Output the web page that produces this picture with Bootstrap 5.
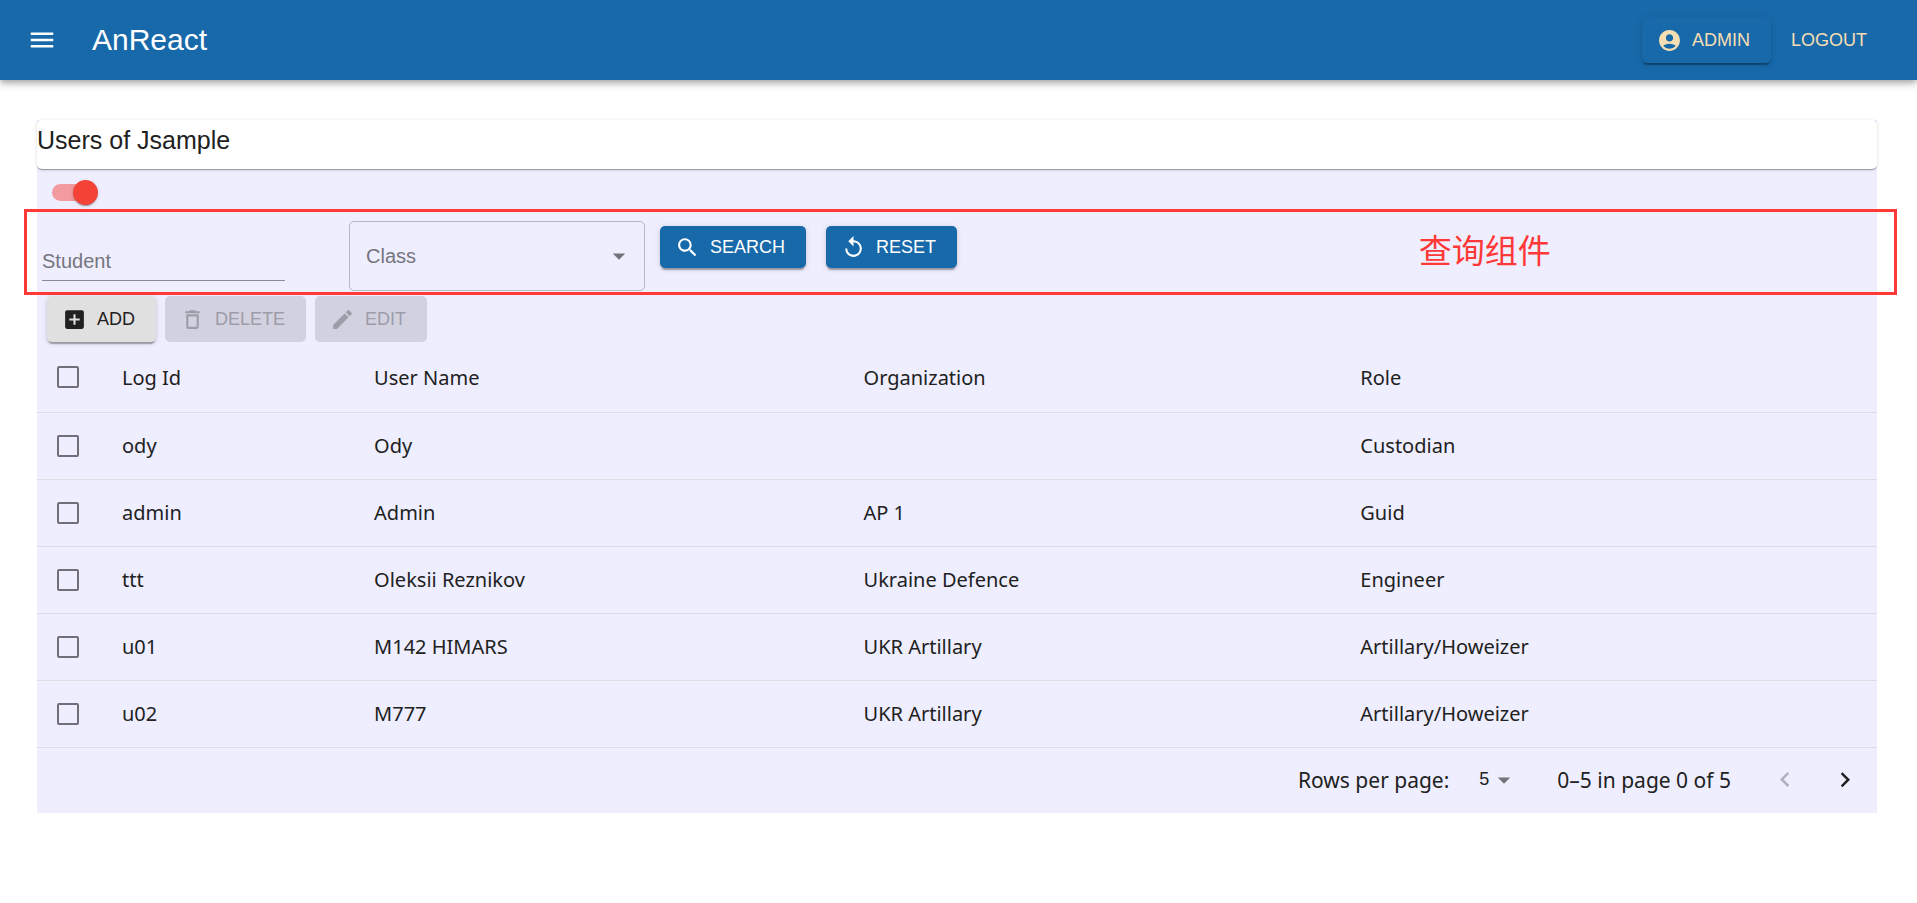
<!DOCTYPE html>
<html lang="en">
<head>
<meta charset="utf-8">
<meta name="viewport" content="width=device-width, initial-scale=1">
<title>AnReact</title>
<link href="https://cdn.jsdelivr.net/npm/bootstrap@5.3.0/dist/css/bootstrap.min.css" rel="stylesheet">
<style>
  :root { --brand: #1869aa; --ink: #212121; --panel: #eeeeff; --mark-red: #ff3838; }
  body { font-family: "Liberation Sans", Arial, sans-serif; font-size: 20px; color: var(--ink); background: #fff; }
  svg { display: block; fill: currentColor; }

  .app-bar { height: 80px; padding: 0 30px 0 12px; background: var(--brand); box-shadow: 0 2px 5px -1px rgba(0,0,0,.2), 0 5px 6px rgba(0,0,0,.14), 0 1px 12px rgba(0,0,0,.12); }
  .menu-btn { padding: 15px; color: #fff; }
  .app-name { font-size: 30px; line-height: 40px; color: #fff; margin-left: 20px; }

  .tool-btn { display: inline-flex; align-items: center; gap: 10px; height: 46px; padding: 0 21px 0 15px; border: 0; border-radius: 5px; font-size: 18px; line-height: 30px; text-transform: uppercase; --bs-btn-disabled-opacity: 1; }
  .raised { box-shadow: 0 4px 1px -2px rgba(0,0,0,.2), 0 2px 2px rgba(0,0,0,.14), 0 1px 6px rgba(0,0,0,.12); }
  .bar-btn, .bar-btn:hover { color: wheat; }
  .text-only { padding: 0 20px; }
  .blue-btn, .blue-btn:hover { height: 42px; color: #fff; background: var(--brand); }
  .grey-btn, .grey-btn:hover { color: var(--ink); background: #e0e0e0; }
  .grey-btn:disabled { color: #9d9ca9; background: #d2d1e0; }

  .page-body { padding: 40px 40px 40px 37px; }
  .user-panel { background: var(--panel); }
  .title-card { padding: 0 0 9px; border-radius: 5px; background: #fff; box-shadow: 0 2px 1px -1px rgba(0,0,0,.2), 0 1px 1px rgba(0,0,0,.14), 0 1px 4px rgba(0,0,0,.12); }
  .title-card h1 { font-size: 25px; line-height: 40px; }

  .switch-row { height: 40px; padding: 15px 15px 0; }
  .red-switch { display: flex; appearance: none; align-items: center; justify-content: flex-end; width: 42px; height: 17px; margin: 0; border-radius: 9px; background: #f19a9f; }
  .red-switch::before { content: ""; flex: none; width: 25px; height: 25px; margin: 0 -4px; border-radius: 50%; background: #f44336; box-shadow: 0 2px 1px -1px rgba(0,0,0,.2), 0 1px 1px rgba(0,0,0,.14), 0 1px 4px rgba(0,0,0,.12); }
  .red-switch:not(:checked) { justify-content: flex-start; }

  .query-row { min-height: 86px; margin: 0 -20px 0 -13px; padding: 9px 12px 0 15px; border: 3px solid var(--mark-red); }
  .query-input { width: 243px; height: 40px; margin: 20px 64px 0 0; padding: 2px 0 0; border: 0; border-bottom: 1px solid #8a8a94; border-radius: 0; background: transparent; font-size: 20px; }
  .query-input::placeholder { color: #75757d; }
  .query-select { width: 296px; height: 70px; margin-right: 15px; padding: 0 48px 0 16px; border: 1px solid #b7b6c5; border-radius: 5px; color: #75757d; font-size: 20px; background: transparent url("data:image/svg+xml,%3Csvg xmlns='http://www.w3.org/2000/svg' viewBox='0 0 24 24'%3E%3Cpath fill='%23737279' d='M7 10l5 5 5-5z'/%3E%3C/svg%3E") no-repeat right 10px center / 30px 30px; }
  .query-row .blue-btn { margin: 5px 20px 0 0; }
  .query-note { margin: 4px 18% 0 auto; font-family: "Noto Sans CJK SC", sans-serif; font-size: 33px; line-height: 48px; color: var(--mark-red); }

  .action-row { gap: 9px; padding: 1px 10px 0; }

  .user-table, .pager { font-family: "Noto Sans", sans-serif; font-size: 20px; line-height: 30px; }
  .user-table { --bs-table-bg: transparent; --bs-table-color: var(--ink); table-layout: fixed; border-color: #dddde1; }
  .user-table th, .user-table td { height: 67px; padding: 0 20px; font-weight: 400; vertical-align: middle; }
  .user-table th { height: 70px; }
  .user-table th + th { padding-top: 2px; }
  .user-table .tick-col { width: 65px; }
  .user-table .id-col { width: 13.7%; }
  .user-table .name-col { width: 26.6%; }
  .user-table .org-col { width: 27%; }
  .form-check-input.tick-box[type="checkbox"] { display: block; width: 22px; height: 22px; margin: 0; border: 2px solid #717079; border-radius: 2px; }
  .form-check-input.tick-box:not(:checked) { background-color: transparent; }

  .pager { min-height: 65px; padding-right: 2px; font-size: 21px; }
  .page-size { width: 48px; margin: 0 38px 0 22px; padding: 0 26px 2px 8px; border: 0; color: var(--ink); font-family: "Liberation Sans", Arial, sans-serif; font-size: 18px; line-height: 30px; background: transparent url("data:image/svg+xml,%3Csvg xmlns='http://www.w3.org/2000/svg' viewBox='0 0 24 24'%3E%3Cpath fill='%23737279' d='M7 10l5 5 5-5z'/%3E%3C/svg%3E") no-repeat right center / 30px 30px; }
  .page-btn, .page-btn:hover { padding: 15px; border: 0; color: var(--ink); --bs-btn-disabled-opacity: 1; }
  .page-btn:disabled { color: #b1b0bf; }
</style>
</head>
<body>
<header class="app-bar d-flex align-items-center position-relative">
  <button type="button" class="btn menu-btn border-0" aria-label="Menu">
    <svg width="30" height="30" viewBox="0 0 24 24"><path d="M3 18h18v-2H3v2zm0-5h18v-2H3v2zm0-7v2h18V6H3z"/></svg>
  </button>
  <span class="app-name">AnReact</span>
  <div class="d-flex ms-auto">
    <button type="button" class="btn tool-btn bar-btn raised">
      <svg width="25" height="25" viewBox="0 0 24 24"><path d="M12 2C6.48 2 2 6.48 2 12s4.48 10 10 10 10-4.48 10-10S17.52 2 12 2zm0 4c1.93 0 3.5 1.57 3.5 3.5S13.93 13 12 13s-3.5-1.57-3.5-3.5S10.07 6 12 6zm0 14c-2.03 0-4.43-.82-6.14-2.88C7.55 15.8 9.68 15 12 15s4.45.8 6.14 2.12C16.43 19.18 14.03 20 12 20z"/></svg>
      Admin
    </button>
    <button type="button" class="btn tool-btn bar-btn text-only">Logout</button>
  </div>
</header>

<main class="page-body">
  <section class="user-panel">
    <div class="title-card"><h1 class="m-0 fw-normal">Users of Jsample</h1></div>

    <div class="switch-row">
      <input type="checkbox" role="switch" class="red-switch" aria-label="Show query form" checked>
    </div>

    <form class="query-row d-flex flex-wrap align-items-start">
      <input type="text" class="form-control query-input" placeholder="Student" aria-label="Student">
      <select class="form-select query-select" aria-label="Class"><option>Class</option></select>
      <button type="button" class="btn tool-btn blue-btn raised">
        <svg width="25" height="25" viewBox="0 0 24 24"><path d="M15.5 14h-.79l-.28-.27C15.41 12.59 16 11.11 16 9.5 16 5.91 13.09 3 9.5 3S3 5.91 3 9.5 5.91 16 9.5 16c1.61 0 3.09-.59 4.23-1.57l.27.28v.79l5 4.99L20.49 19l-4.99-5zm-6 0C7.01 14 5 11.99 5 9.5S7.01 5 9.5 5 14 7.01 14 9.5 11.99 14 9.5 14z"/></svg>
        Search
      </button>
      <button type="reset" class="btn tool-btn blue-btn raised">
        <svg width="25" height="25" viewBox="0 0 24 24"><path d="M12 5V1L7 6l5 5V7c3.31 0 6 2.69 6 6s-2.69 6-6 6-6-2.69-6-6H4c0 4.42 3.58 8 8 8s8-3.58 8-8-3.58-8-8-8z"/></svg>
        Reset
      </button>
      <span class="query-note" lang="zh-CN">查询组件</span>
    </form>

    <div class="action-row d-flex flex-wrap">
      <button type="button" class="btn tool-btn grey-btn raised">
        <svg width="25" height="25" viewBox="0 0 24 24"><path d="M19 3H5c-1.11 0-2 .9-2 2v14c0 1.1.89 2 2 2h14c1.1 0 2-.9 2-2V5c0-1.1-.9-2-2-2zm-2 10h-4v4h-2v-4H7v-2h4V7h2v4h4v2z"/></svg>
        Add
      </button>
      <button type="button" class="btn tool-btn grey-btn" disabled>
        <svg width="25" height="25" viewBox="0 0 24 24"><path d="M6 19c0 1.1.9 2 2 2h8c1.1 0 2-.9 2-2V7H6v12zM8 9h8v10H8V9zm7.5-5l-1-1h-5l-1 1H5v2h14V4z"/></svg>
        Delete
      </button>
      <button type="button" class="btn tool-btn grey-btn" disabled>
        <svg width="25" height="25" viewBox="0 0 24 24"><path d="M3 17.25V21h3.75L17.81 9.94l-3.75-3.75L3 17.25zM20.71 7.04c.39-.39.39-1.02 0-1.41l-2.34-2.34c-.39-.39-1.02-.39-1.41 0l-1.83 1.83 3.75 3.75 1.83-1.83z"/></svg>
        Edit
      </button>
    </div>

    <table class="table user-table mb-0">
      <thead>
        <tr>
          <th class="tick-col"><input type="checkbox" class="form-check-input tick-box" aria-label="Select all"></th>
          <th class="id-col">Log Id</th>
          <th class="name-col">User Name</th>
          <th class="org-col">Organization</th>
          <th>Role</th>
        </tr>
      </thead>
      <tbody>
        <tr><td><input type="checkbox" class="form-check-input tick-box" aria-label="Select ody"></td><td>ody</td><td>Ody</td><td></td><td>Custodian</td></tr>
        <tr><td><input type="checkbox" class="form-check-input tick-box" aria-label="Select admin"></td><td>admin</td><td>Admin</td><td>AP 1</td><td>Guid</td></tr>
        <tr><td><input type="checkbox" class="form-check-input tick-box" aria-label="Select ttt"></td><td>ttt</td><td>Oleksii Reznikov</td><td>Ukraine Defence</td><td>Engineer</td></tr>
        <tr><td><input type="checkbox" class="form-check-input tick-box" aria-label="Select u01"></td><td>u01</td><td>M142 HIMARS</td><td>UKR Artillary</td><td>Artillary/Howeizer</td></tr>
        <tr><td><input type="checkbox" class="form-check-input tick-box" aria-label="Select u02"></td><td>u02</td><td>M777</td><td>UKR Artillary</td><td>Artillary/Howeizer</td></tr>
      </tbody>
    </table>

    <nav class="pager d-flex flex-wrap align-items-center justify-content-end" aria-label="Pages">
      <label for="page-size">Rows per page:</label>
      <select id="page-size" class="form-select page-size"><option>5</option></select>
      <span class="me-4">0–5 in page 0 of 5</span>
      <button type="button" class="btn page-btn" aria-label="Previous page" disabled>
        <svg width="30" height="30" viewBox="0 0 24 24"><path d="M15.41 16.09l-4.58-4.59 4.58-4.59L14 5.5l-6 6 6 6z"/></svg>
      </button>
      <button type="button" class="btn page-btn" aria-label="Next page">
        <svg width="30" height="30" viewBox="0 0 24 24"><path d="M8.59 16.34l4.58-4.59-4.58-4.59L10 5.75l6 6-6 6z"/></svg>
      </button>
    </nav>
  </section>
</main>
<script src="https://cdn.jsdelivr.net/npm/bootstrap@5.3.0/dist/js/bootstrap.bundle.min.js"></script>
</body>
</html>
